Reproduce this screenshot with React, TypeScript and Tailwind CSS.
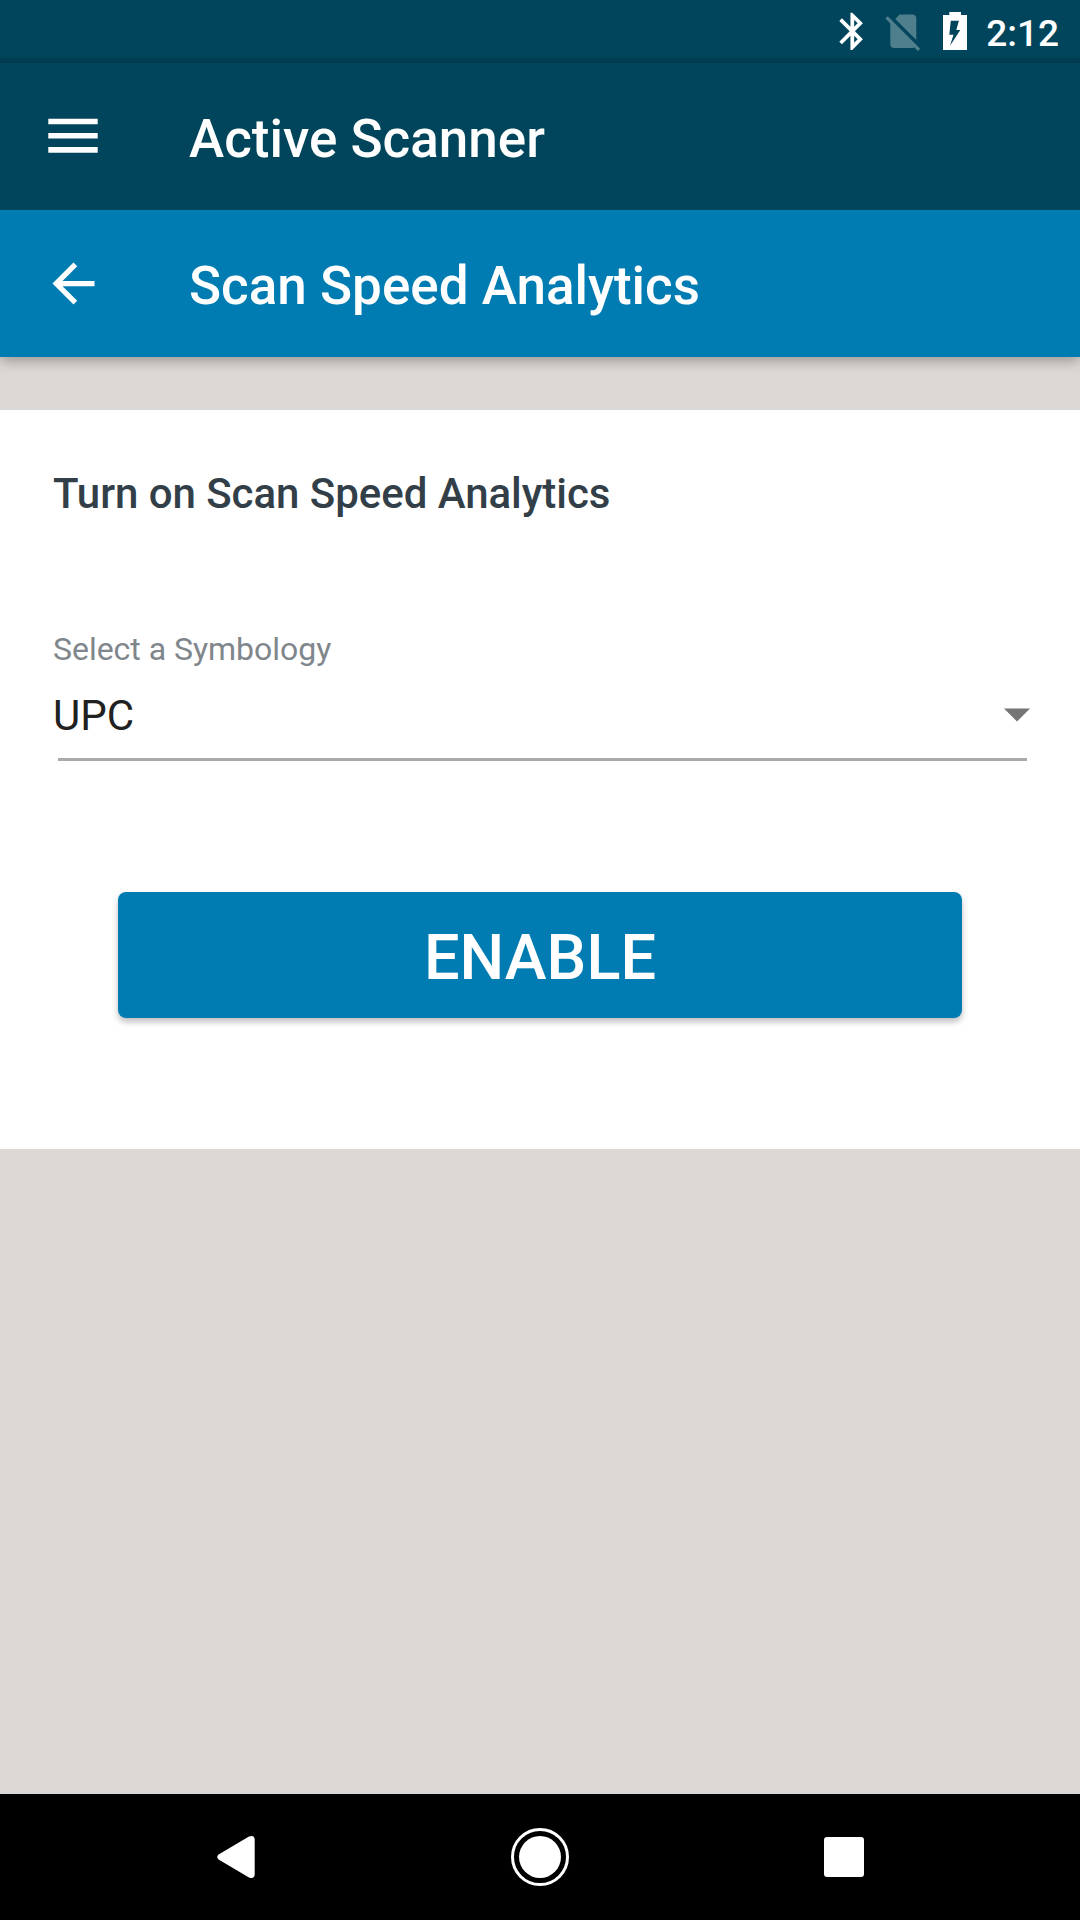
import React from "react";

function BluetoothIcon() {
  return (
    <svg className="h-[44.6px] w-[44.6px]" viewBox="0 0 24 24" fill="#fff">
      <path d="M17.71 7.71L12 2h-1v7.59L6.41 5 5 6.41 10.59 12 5 17.59 6.41 19 11 14.41V22h1l5.71-5.71-4.3-4.29 4.3-4.29zM13 5.83l1.88 1.88L13 9.59V5.83zm1.88 10.46L13 18.17v-3.76l1.88 1.88z" />
    </svg>
  );
}

function NoSimIcon() {
  return (
    <svg className="ml-[6.3px] h-[44.6px] w-[44.6px]" viewBox="0 0 24 24" fill="#fff" fillOpacity="0.31">
      <path d="M18.99 5c0-1.1-.89-2-1.99-2h-7L7.66 5.34 19 16.68 18.99 5zM3.65 3.88L2.38 5.15 5 7.77V19c0 1.1.9 2 2 2h10.01c.35 0 .67-.1.96-.26l1.88 1.88 1.27-1.27L3.65 3.88z" />
    </svg>
  );
}

function BatteryIcon() {
  return (
    <svg className="-mt-[1px] ml-[17.4px] h-[38px] w-[24px]" viewBox="0 0 24 38" fill="#fff">
      <path
        fillRule="evenodd"
        d="M6.3 0H18v3h6v35H0V3h6.3V0zM7.8 8.8L6.3 22.7h4.2L7 33.7 17.3 18h-4l2.6-9.2H7.8z"
      />
    </svg>
  );
}

export default function App() {
  return (
    <div className="flex h-[1920px] w-[1080px] flex-col overflow-hidden bg-[#dcd8d5] font-['Roboto',sans-serif]">
      <header className="relative shrink-0 shadow-[0_4px_12px_rgba(0,0,0,0.3)]">
        <div className="flex h-[63px] items-center justify-end bg-[#00455b] pr-[21px] shadow-[inset_0_-7px_6px_-5px_rgba(0,0,0,0.28)]">
          <BluetoothIcon />
          <NoSimIcon />
          <BatteryIcon />
          <span className="ml-[19px] pt-[4px] text-[37px] leading-[43px] font-medium text-white">2:12</span>
        </div>
        <div className="flex h-[147px] items-center bg-[#00455b]">
          <svg className="ml-[42px] h-[63px] w-[63px]" viewBox="0 0 63 63" fill="#fff">
            <path d="M6.3 13.7h49.4v5.5H6.3zM6.3 28h49.4v5.6H6.3zM6.3 42h49.4v5.8H6.3z" />
          </svg>
          <h1 className="ml-[84px] pt-[4px] text-[53px] leading-[62px] font-medium text-white">Active Scanner</h1>
        </div>
        <div className="flex h-[147px] items-center bg-[#007cb2]">
          <svg className="ml-[42px] h-[63px] w-[63px]" viewBox="0 0 24 24" fill="#fff">
            <path d="M20 11H7.83l5.59-5.59L12 4l-8 8 8 8 1.41-1.41L7.83 13H20v-2z" />
          </svg>
          <h2 className="ml-[84px] pt-[4px] text-[53px] leading-[62px] font-medium text-white">
            Scan Speed Analytics
          </h2>
        </div>
      </header>

      <main className="mt-[53px] flex h-[739px] shrink-0 flex-col bg-white px-[53px] pt-[59px]">
        <h3 className="text-[42px] leading-[50px] font-medium tracking-[-0.04px] text-[#333f48]">
          Turn on Scan Speed Analytics
        </h3>
        <label className="mt-[111px] text-[32px] leading-[38px] tracking-[-0.03px] text-[#7f868c]">
          Select a Symbology
        </label>
        <div className="mt-[22px] flex h-[50px] items-center justify-between">
          <span className="pt-[2px] text-[42px] leading-[50px] text-[#212121]">UPC</span>
          <svg className="-mr-[3px] h-[14px] w-[26px]" viewBox="0 0 26 14" fill="#757575">
            <path d="M0 .5h26L13 13.5z" />
          </svg>
        </div>
        <div className="mt-[18px] ml-[5px] h-[3px] w-[969px] bg-[#aaaaaa]" />
        <button className="mt-[131px] ml-[65px] flex h-[126px] w-[844px] items-center justify-center rounded-[8px] bg-[#007cb2] pt-[6px] text-[63px] leading-[74px] font-medium text-white shadow-[0_4px_6px_rgba(0,0,0,0.25)]">
          ENABLE
        </button>
      </main>

      <nav className="mt-auto flex h-[126px] shrink-0 items-center bg-black pl-[217px]">
        <svg className="h-[42px] w-[38px]" viewBox="0 0 38 42" fill="#fff">
          <path d="M1.6 18.5L32 .6Q37.3-1.2 37.7 3.5V38.5Q37.3 43.2 32 41.4L1.6 23.5Q-1.2 21 1.6 18.5z" />
        </svg>
        <svg className="ml-[256px] h-[58px] w-[58px]" viewBox="0 0 58 58" fill="#fff">
          <circle cx="29" cy="29" r="27.5" fill="none" stroke="#fff" strokeWidth="3" />
          <circle cx="29" cy="29" r="21" />
        </svg>
        <div className="ml-[255.3px] h-[39.5px] w-[39.5px] rounded-[3px] bg-white" />
      </nav>
    </div>
  );
}
